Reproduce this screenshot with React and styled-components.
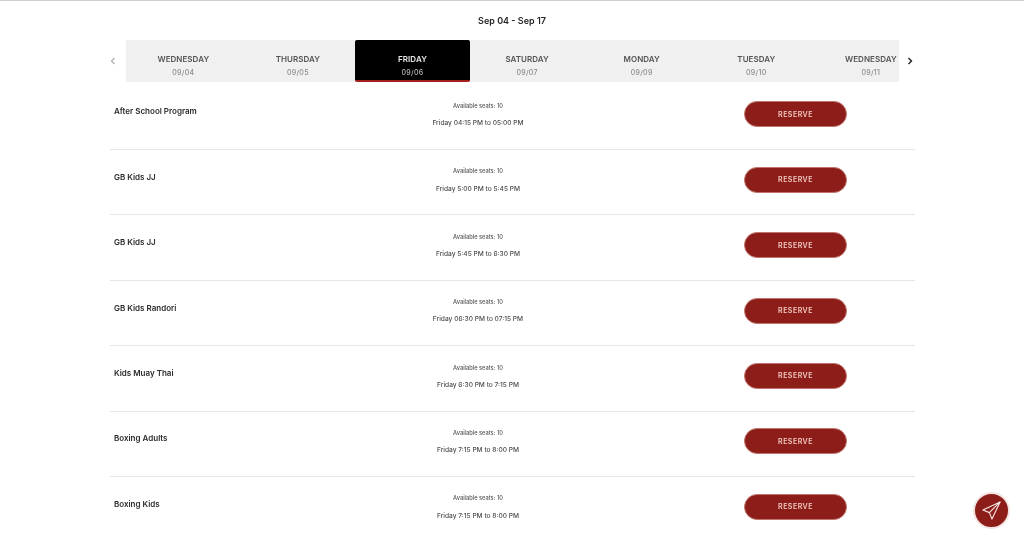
import React from "react";
import styled, { createGlobalStyle } from "styled-components";

const Global = createGlobalStyle`
  html, body { margin: 0; padding: 0; background: #fff; overflow: hidden; }
  body { font-family: "Inter", "Open Sans", "Liberation Sans", sans-serif; }
`;
const Page = styled.div`
  width: 1024px; height: 542px; border-top: 1px solid #cfcfcf; box-sizing: border-box;
  position: relative; overflow: hidden; will-change: transform;
`;
const Title = styled.h1`
  margin: 0; height: 39px; padding-top: 13px; box-sizing: border-box; text-align: center;
  font-size: 9px; line-height: 13px; font-weight: 600; color: #222;
`;
const Carousel = styled.div`
  display: flex; align-items: center; margin-left: 100px; width: 821px;
`;
const Arrow = styled.button`
  width: ${p => (p.$muted ? "26px" : "22px")}; flex: none; border: 0; background: none; padding: 0;
  display: flex; justify-content: center;
  color: ${p => (p.$muted ? "#a9a9a9" : "#222")};
  svg { display: block; }
`;
const Strip = styled.div`
  width: 773px; height: 42px; background: #f0f0f0; display: flex; overflow: hidden; flex: none;
`;
const Day = styled.div`
  flex: 0 0 114.6px; height: 42px; box-sizing: border-box; text-align: center; padding-top: 14px;
  border-radius: 2px;
  background: ${p => (p.$active ? "#000" : "transparent")};
  border-bottom: ${p => (p.$active ? "2px solid #a3201f" : "0")};
`;
const DayName = styled.div`
  font-size: 8px; line-height: 11px; font-weight: 600; letter-spacing: .05px;
  color: ${p => (p.$active ? "#e8e8e8" : "#555")};
`;
const DayDate = styled.div`
  margin-top: 3px; font-size: 7px; line-height: 9px; font-weight: 500; letter-spacing: .3px;
  color: ${p => (p.$active ? "#bbb" : "#8a8a8a")};
`;
const List = styled.div`
  margin: 2.6px 109px 0 110px;
`;
const Row = styled.div`
  display: grid; grid-template-columns: 226px 284px 1fr; height: 65.4px; box-sizing: border-box;
  border-bottom: ${p => (p.$last ? "0" : "1px solid #e6e6e6")};
`;
const Name = styled.div`
  padding: 21.8px 0 0 4px; font-size: 8px; line-height: 11px; font-weight: 600; color: #2a2a2a;
`;
const Info = styled.div`
  text-align: center; padding-top: 17.4px;
`;
const Seats = styled.div`
  font-size: 5.7px; line-height: 7px; font-weight: 500; color: #555;
`;
const Time = styled.div`
  margin-top: 9.2px; font-size: 6.6px; line-height: 10px; font-weight: 500; color: #4d4d4d;
`;
const Reserve = styled.button`
  justify-self: start; margin: 16.8px 0 0 124px; width: 103px; height: 26px; border-radius: 13px;
  background: #8c1d18; border: 1px solid #c0766f; box-sizing: border-box; color: #f2c9c2;
  font: 600 7px "Inter", sans-serif; letter-spacing: .5px;
`;
const Fab = styled.button`
  position: absolute; left: 973px; top: 491px; width: 37px; height: 37px; border-radius: 50%;
  background: #8c1d18; border: 2px solid #f3e3e1; box-sizing: border-box; padding: 0;
  display: flex; align-items: center; justify-content: center;
`;

const days = [
  ["WEDNESDAY", "09/04"], ["THURSDAY", "09/05"], ["FRIDAY", "09/06"], ["SATURDAY", "09/07"],
  ["MONDAY", "09/09"], ["TUESDAY", "09/10"], ["WEDNESDAY", "09/11"],
];
const rows = [
  ["After School Program", "Friday 04:15 PM to 05:00 PM"],
  ["GB Kids JJ", "Friday 5:00 PM to 5:45 PM"],
  ["GB Kids JJ", "Friday 5:45 PM to 6:30 PM"],
  ["GB Kids Randori", "Friday 06:30 PM to 07:15 PM"],
  ["Kids Muay Thai", "Friday 6:30 PM to 7:15 PM"],
  ["Boxing Adults", "Friday 7:15 PM to 8:00 PM"],
  ["Boxing Kids", "Friday 7:15 PM to 8:00 PM"],
];

export default function App() {
  return (
    <Page>
      <Global />
      <Title>Sep 04 - Sep 17</Title>
      <Carousel>
        <Arrow $muted aria-label="Previous">
          <svg width="6" height="8" viewBox="0 0 6 8" fill="none" stroke="currentColor" strokeWidth="1.1"><path d="M4.5 1 1.5 4l3 3" /></svg>
        </Arrow>
        <Strip>
          {days.map(([n, d], i) => (
            <Day key={i} $active={i === 2}>
              <DayName $active={i === 2}>{n}</DayName>
              <DayDate $active={i === 2}>{d}</DayDate>
            </Day>
          ))}
        </Strip>
        <Arrow aria-label="Next">
          <svg width="6" height="8" viewBox="0 0 6 8" fill="none" stroke="currentColor" strokeWidth="1.4"><path d="M1.5 1 4.5 4l-3 3" /></svg>
        </Arrow>
      </Carousel>
      <List>
        {rows.map(([n, t], i) => (
          <Row key={i} $last={i === rows.length - 1}>
            <Name>{n}</Name>
            <Info>
              <Seats>Available seats: 10</Seats>
              <Time>{t}</Time>
            </Info>
            <Reserve>RESERVE</Reserve>
          </Row>
        ))}
      </List>
      <Fab aria-label="Send">
        <svg width="21" height="21" viewBox="0 0 22 22" fill="none" stroke="#f6e6e3" strokeWidth="1.2" strokeLinejoin="round">
          <path d="M20 2 2 10.5l6.8 2.7L11.5 20 20 2Z" />
          <path d="M20 2 8.8 13.2" />
        </svg>
      </Fab>
    </Page>
  );
}
